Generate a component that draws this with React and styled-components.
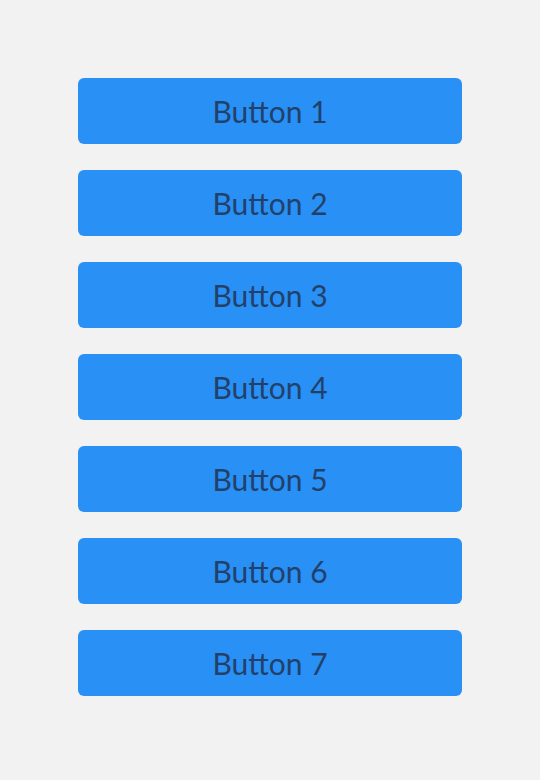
import React from 'react';
import styled, { createGlobalStyle } from 'styled-components';

const GlobalStyle = createGlobalStyle`
  html, body {
    margin: 0;
    padding: 0;
    background: #f2f2f3;
  }
  body {
    font-family: 'Lato', 'Open Sans', sans-serif;
  }
`;

const Page = styled.main`
  width: 540px;
  height: 780px;
  box-sizing: border-box;
  padding: 78px 0 0 78px;
`;

const Stack = styled.div`
  display: flex;
  flex-direction: column;
  gap: 26px;
  width: 384px;
`;

const Button = styled.button`
  height: 66px;
  border: none;
  border-radius: 6px;
  background: #2990f5;
  color: #22416a;
  font-family: 'Lato', 'Open Sans', sans-serif;
  font-size: 30px;
  font-weight: 400;
  cursor: pointer;
  padding: 0;
`;

const labels = [1, 2, 3, 4, 5, 6, 7];

const App = () => {
  return (
    <>
      <GlobalStyle />
      <Page>
        <Stack>
          {labels.map((n) => (
            <Button key={n}>Button {n}</Button>
          ))}
        </Stack>
      </Page>
    </>
  );
};

export default App;
